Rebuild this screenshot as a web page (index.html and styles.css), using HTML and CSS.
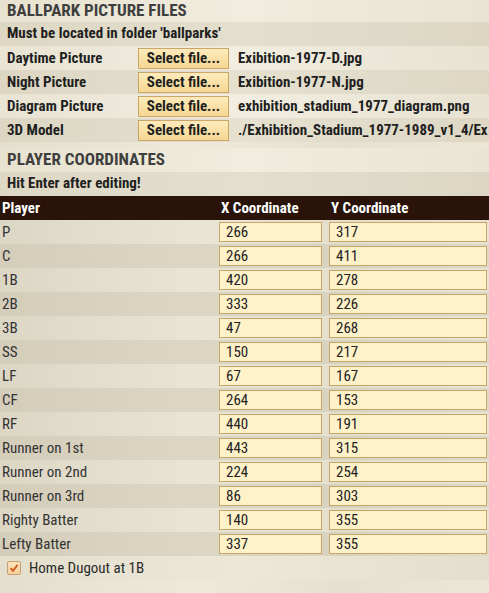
FILE: index.html
```html
<!DOCTYPE html>
<html lang="en">
<head>
    <meta charset="UTF-8">
    <title>Ballpark Setup</title>
    <link rel="stylesheet" href="styles.css">
</head>
<body>
    <!-- Ballpark picture files -->
    <div class="secao">
        <h2 class="titulo">BALLPARK PICTURE FILES</h2>
        <div class="aviso">Must be located in folder 'ballparks'</div>
        <div class="linha-arquivo">
            <span class="rotulo">Daytime Picture</span>
            <button class="botao">Select file...</button>
            <span class="arquivo">Exibition-1977-D.jpg</span>
        </div>
        <div class="linha-arquivo escura">
            <span class="rotulo">Night Picture</span>
            <button class="botao">Select file...</button>
            <span class="arquivo">Exibition-1977-N.jpg</span>
        </div>
        <div class="linha-arquivo">
            <span class="rotulo">Diagram Picture</span>
            <button class="botao">Select file...</button>
            <span class="arquivo">exhibition_stadium_1977_diagram.png</span>
        </div>
        <div class="linha-arquivo escura">
            <span class="rotulo">3D Model</span>
            <button class="botao">Select file...</button>
            <span class="arquivo">./Exhibition_Stadium_1977-1989_v1_4/Ex</span>
        </div>
    </div>

    <!-- Player coordinates -->
    <div class="secao coords">
        <h2 class="titulo">PLAYER COORDINATES</h2>
        <div class="aviso">Hit Enter after editing!</div>
        <div class="tabela">
            <div class="cabecalho">
                <span>Player</span>
                <span>X Coordinate</span>
                <span>Y Coordinate</span>
            </div>
            <div class="linha"><span>P</span><input value="266"><input value="317"></div>
            <div class="linha"><span>C</span><input value="266"><input value="411"></div>
            <div class="linha"><span>1B</span><input value="420"><input value="278"></div>
            <div class="linha"><span>2B</span><input value="333"><input value="226"></div>
            <div class="linha"><span>3B</span><input value="47"><input value="268"></div>
            <div class="linha"><span>SS</span><input value="150"><input value="217"></div>
            <div class="linha"><span>LF</span><input value="67"><input value="167"></div>
            <div class="linha"><span>CF</span><input value="264"><input value="153"></div>
            <div class="linha"><span>RF</span><input value="440"><input value="191"></div>
            <div class="linha"><span>Runner on 1st</span><input value="443"><input value="315"></div>
            <div class="linha"><span>Runner on 2nd</span><input value="224"><input value="254"></div>
            <div class="linha"><span>Runner on 3rd</span><input value="86"><input value="303"></div>
            <div class="linha"><span>Righty Batter</span><input value="140"><input value="355"></div>
            <div class="linha"><span>Lefty Batter</span><input value="337"><input value="355"></div>
        </div>
        <label class="marcar">
            <span class="caixa">
                <svg width="10" height="10" viewBox="0 0 10 10">
                    <path d="M1.5 5.2 L4 7.8 L8.6 1.8" fill="none" stroke="#d4531c" stroke-width="1.8"/>
                </svg>
            </span>
            Home Dugout at 1B
        </label>
    </div>
</body>
</html>
```

FILE: styles.css
```css
/* Reset */
* {
    margin: 0;
    padding: 0;
    box-sizing: border-box;
}

body {
    font-family: 'Roboto', 'Liberation Sans Narrow', sans-serif;
    font-stretch: 75%;
    font-size: 15px;
    color: #2b2b2b;
    background: linear-gradient(90deg, #e4dfcd 0%, #eee9d9 40%, #e6e1cf 70%, #ebe6d6 100%);
    width: 489px;
    height: 593px;
    overflow: hidden;
}

.titulo {
    font-size: 17px;
    font-weight: bold;
    color: #3f3f3f;
    height: 22px;
    line-height: 20px;
    padding-left: 7px;
    background: linear-gradient(90deg, #e8e2d0, #f1ecdd 50%, #e9e4d3);
}

.aviso {
    font-weight: bold;
    height: 24px;
    line-height: 22px;
    padding-left: 7px;
    color: #1f1f1f;
    background: linear-gradient(90deg, #ddd7c4, #e4dfcd 50%, #dcd6c3);
}

.linha-arquivo {
    display: flex;
    align-items: center;
    height: 24px;
    padding-left: 7px;
    white-space: nowrap;
    font-weight: bold;
    color: #1f1f1f;
    background: linear-gradient(90deg, #e9e4d3, #f1ede0 50%, #e7e2d1);
}

.linha-arquivo.escura {
    background: linear-gradient(90deg, #dcd6c3, #e6e1cf 50%, #ddd7c4);
}

.rotulo {
    width: 131px;
    flex-shrink: 0;
}

.botao {
    width: 91px;
    height: 21px;
    flex-shrink: 0;
    font-family: inherit;
    font-stretch: inherit;
    font-size: 15px;
    font-weight: bold;
    color: #1f1f1f;
    border: 1px solid #c9a668;
    background: linear-gradient(#fcebbb, #f6d793);
    margin-right: 9px;
}

.arquivo {
    overflow: hidden;
}

.coords {
    margin-top: 6px;
}

.coords .titulo {
    height: 24px;
    line-height: 22px;
}

.cabecalho,
.linha {
    display: grid;
    grid-template-columns: 217px 103px 7px 158px;
    align-items: center;
    height: 24px;
    padding-left: 2px;
}

.cabecalho {
    background: #2a140a;
    color: #fff;
    font-weight: bold;
}

.cabecalho span:nth-child(2) {
    padding-left: 2px;
}

.cabecalho span:nth-child(3) {
    grid-column: 4;
    padding-left: 2px;
}

.linha {
    color: #333;
    background: linear-gradient(90deg, #dcd7c5, #e9e4d4 40%, #e4dfcd 70%, #e8e3d3);
}

.linha:nth-child(odd) {
    background: linear-gradient(90deg, #d3cdb9, #dcd6c3 40%, #d8d2bf 70%, #dfd9c6);
}

.linha span {
    grid-column: 1;
}

.linha input {
    height: 20px;
    font-family: inherit;
    font-stretch: inherit;
    font-size: 15px;
    color: #222;
    padding-left: 6px;
    border: 1px solid #c6a66a;
    background: #fff1c8;
    outline: none;
}

.linha input:nth-of-type(1) {
    grid-column: 2;
}

.linha input:nth-of-type(2) {
    grid-column: 4;
}

.marcar {
    display: flex;
    align-items: center;
    gap: 8px;
    height: 24px;
    padding-left: 7px;
    color: #2b2b2b;
    background: linear-gradient(90deg, #e4dfcd, #ece7d7 50%, #e4dfcd);
}

.caixa {
    width: 14px;
    height: 14px;
    display: flex;
    align-items: center;
    justify-content: center;
    border: 1px solid #c89f70;
    border-radius: 2px;
    background: linear-gradient(#fde4bd, #f5cf9a);
}
```
